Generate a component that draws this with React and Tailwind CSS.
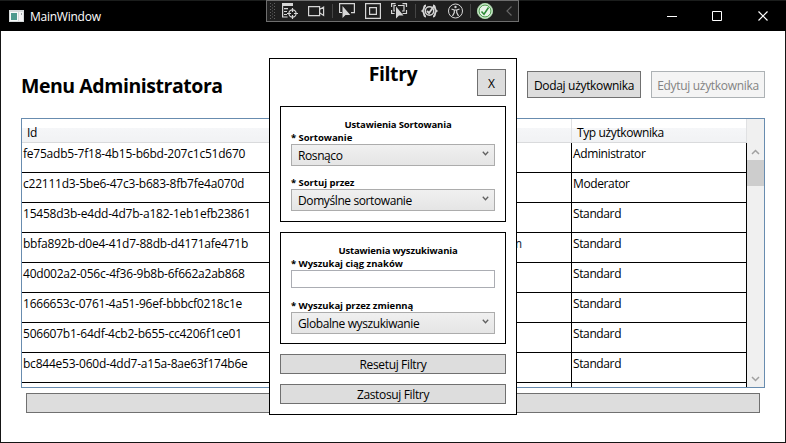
import React from "react";

const rows = [
  ["fe75adb5-7f18-4b15-b6bd-207c1c51d670", "", "Administrator"],
  ["c22111d3-5be6-47c3-b683-8fb7fe4a070d", "", "Moderator"],
  ["15458d3b-e4dd-4d7b-a182-1eb1efb23861", "", "Standard"],
  ["bbfa892b-d0e4-41d7-88db-d4171afe471b", "m", "Standard"],
  ["40d002a2-056c-4f36-9b8b-6f662a2ab868", "", "Standard"],
  ["1666653c-0761-4a51-96ef-bbbcf0218c1e", "", "Standard"],
  ["506607b1-64df-4cb2-b655-cc4206f1ce01", "", "Standard"],
  ["bc844e53-060d-4dd7-a15a-8ae63f174b6e", "", "Standard"],
  ["", "", ""],
];

function DebugToolbar() {
  return (
    <div className="absolute left-[266px] top-[-1px] h-[22px] w-[253px] border border-[#6e6e6e] bg-[#1f1f1f]">
      <svg width="251" height="20" viewBox="267 1 251 20" fill="none" stroke="#d6d6d6" strokeWidth="1.2">
        <g stroke="#606060" strokeWidth="1" strokeDasharray="1 2">
          <path d="M270.5 3v16M274.5 3v16" />
          <path d="M272.5 4.5v14" />
        </g>
        <path d="M282 4.5h11" strokeWidth="3" />
        <path d="M282.6 6v11h5M284 8.6h4M284 11.5h3M284 14.5h3" />
        <circle cx="292.5" cy="13.5" r="3.6" />
        <path d="M292.5 8v4M292.5 15v4M287 13.5h4M294 13.5h4" />
        <path d="M308.6 6.6h11v9h-11zM319.6 9.6l4-2.6v8.4l-4-2.6" />
        <path d="M332.5 4v14M415.5 4v14M470.5 4v14" stroke="#454545" strokeWidth="1" />
        <path d="M342 12.5h-2.4V3.6h14.8v9H351" />
        <path d="M342.5 6v12l3-3h4.8z" fill="#d6d6d6" stroke="none" />
        <path d="M365.6 3.6h14.8v14.8h-14.8zM369.6 7.6h6.8v6.8h-6.8z" />
        <path d="M391.6 7V3.6h4M402.5 3.6h4V7M406.5 10v3.5h-4M391.6 10v3.5h3M398 5.5h6v5.5h-2M396 5.5h-2V11h1" />
        <path d="M396 6.5v12l3-3h4.5z" fill="#d6d6d6" stroke="none" />
        <path d="M426 5.5c-3 0-1 4-3.5 5.5 2.500 1.500.5 5.500 3.500 5.500M433 5.500c3 0 1 4 3.500 5.500-2.500 1.500-.5 5.500-3.500 5.500" strokeWidth="1.9" />
        <circle cx="429.500" cy="11" r="4.200" strokeWidth="1.500" />
        <path d="M427 11l2 2 5-7" strokeWidth="1.800" />
        <circle cx="455.500" cy="11" r="7" strokeWidth="1" />
        <circle cx="455.500" cy="7" r="1.200" fill="#d6d6d6" stroke="none" />
        <path d="M451.500 9l2.700 1h2.600l2.700-1M454.300 10v2.500l-1.800 3.500M456.700 10v2.500l1.800 3.500" />
        <circle cx="485" cy="11" r="7.600" fill="#e8f3e8" stroke="#a9d6a9" strokeWidth="1" />
        <circle cx="485" cy="11" r="6" stroke="#389438" strokeWidth="1" />
        <path d="M481.500 11.500l2.500 2.700 4.500-6.700" stroke="#2b8a35" strokeWidth="1.500" />
        <path d="M511.500 6.500L507 11l4.500 4.500" stroke="#686868" strokeWidth="1.200" />
      </svg>
    </div>
  );
}

function TitleBar() {
  return (
    <header className="relative flex h-[31px] shrink-0 items-center border-t border-[#1b1d1c] bg-black text-white">
      <svg className="ml-[9px] mb-px" width="15" height="12" viewBox="0 0 15 12">
        <rect width="15" height="12" fill="#d6dadb" />
        <rect x="1" y="2" width="8" height="9" fill="#f7fafa" />
        <rect x="2" y="3" width="6" height="7" fill="#4e9a8e" />
        <rect x="10" y="2" width="4" height="9" fill="#f4f4f4" />
        <rect x="12" y="3" width="1" height="2" fill="#9fa7aa" />
      </svg>
      <span className="ml-[6px] pt-px text-[12px] tracking-[-0.25px]">MainWindow</span>
      <svg className="ml-auto mr-[17px] mb-px" width="102" height="12" viewBox="0 0 102 12" fill="none" stroke="white" strokeWidth="1">
        <path d="M0 6.500h10M45.500 1.500h9v9h-9z" />
        <path d="M91.500 1.500l9 9M100.500 1.500l-9 9" strokeWidth="1.200" />
      </svg>
      <DebugToolbar />
    </header>
  );
}

function Select({ children }) {
  return (
    <div className="flex h-[22px] items-center justify-between border border-[#acacac] bg-linear-to-b from-[#f0f0f0] to-[#e5e5e5] pl-[6px] pr-[5px]">
      <span className="pt-[2px] tracking-[-0.4px]">{children}</span>
      <svg className="mb-[3px]" width="7" height="5" viewBox="0 0 7 5" fill="none" stroke="#606060" strokeWidth="1.300">
        <path d="M.8.8l2.700 3L6.200.8" />
      </svg>
    </div>
  );
}

function Label({ children }) {
  return <div className="h-[13px] text-[9.500px] font-bold leading-[13px] tracking-[-0.04px]">{children}</div>;
}

function GroupTitle({ children }) {
  return <div className="h-[13px] pl-[10px] text-center text-[9.500px] font-bold leading-[13px] tracking-[-0.14px]">{children}</div>;
}

function FilterDialog() {
  return (
    <section className="absolute left-[269px] top-[58px] flex h-[357px] w-[248px] flex-col border border-black bg-white px-[10px]">
      <div className="flex h-[47px]">
        <h2 className="w-[226px] pl-[29px] pt-[2px] text-center text-[19.500px] font-bold leading-[26px] tracking-[-0.4px]">Filtry</h2>
        <button className="mt-[10px] h-[27px] w-[29px] shrink-0 border border-[#707070] bg-[#dddddd] pt-[2px]">X</button>
      </div>
      <fieldset className="flex h-[116px] flex-col border border-black px-[10px] pt-[11px]">
        <GroupTitle>Ustawienia Sortowania</GroupTitle>
        <Label>* Sortowanie</Label>
        <Select>Rosnąco</Select>
        <div className="h-[10px]" />
        <Label>* Sortuj przez</Label>
        <Select>Domyślne sortowanie</Select>
      </fieldset>
      <fieldset className="mt-[10px] flex h-[112px] flex-col border border-black px-[10px] pt-[11px]">
        <GroupTitle>Ustawienia wyszukiwania</GroupTitle>
        <Label>* Wyszukaj ciąg znaków</Label>
        <div className="h-[18px] border border-[#abadb3] bg-white" />
        <div className="h-[11px]" />
        <Label>* Wyszukaj przez zmienną</Label>
        <Select>Globalne wyszukiwanie</Select>
      </fieldset>
      <button className="mt-[10px] h-[20px] border border-[#707070] bg-[#dddddd] pt-[2px] leading-[16px] tracking-[-0.35px]">Resetuj Filtry</button>
      <button className="mt-[10px] h-[20px] border border-[#707070] bg-[#dddddd] pt-[2px] leading-[16px] tracking-[-0.35px]">Zastosuj Filtry</button>
    </section>
  );
}

function ScrollBar() {
  return (
    <div className="flex w-[17px] shrink-0 flex-col items-center bg-[#f0f0f0] pt-[30px]">
      <svg width="9" height="6" viewBox="0 0 9 6" fill="none" stroke="#a0a0a0" strokeWidth="1.500">
        <path d="M1 5l3.500-3.500L8 5" />
      </svg>
      <div className="mt-[5px] h-[26px] w-full bg-[#cdcdcd]" />
      <svg className="mb-[5px] mt-auto" width="9" height="6" viewBox="0 0 9 6" fill="none" stroke="#a0a0a0" strokeWidth="1.500">
        <path d="M1 1l3.500 3.500L8 1" />
      </svg>
    </div>
  );
}

export default function App() {
  return (
    <div className="relative flex h-[443px] w-[786px] flex-col overflow-hidden bg-white font-['Open_Sans','Noto_Sans',sans-serif] text-[12px] leading-[16px] text-black">
      <TitleBar />
      <main className="flex flex-1 flex-col border-x border-b border-[#151515] pl-[20px] pr-[20px]">
        <div className="flex h-[87px] items-start">
          <h1 className="pt-[42px] text-[19.500px] font-bold leading-[26px] tracking-[-0.45px]">Menu Administratora</h1>
          <button className="ml-auto mt-[40px] h-[27px] w-[114px] whitespace-nowrap border border-[#707070] bg-[#dddddd] pt-[2px] tracking-[-0.32px]">Dodaj użytkownika</button>
          <button className="ml-[10px] mt-[40px] h-[27px] w-[114px] whitespace-nowrap border border-[#adb2b5] bg-[#f4f4f4] pt-[2px] tracking-[-0.32px] text-[#838383]">Edytuj użytkownika</button>
        </div>
        <div className="flex h-[270px] border border-[#688caf]">
          <div className="flex flex-1 flex-col overflow-hidden">
            <div className="flex h-[24px] shrink-0 border-b border-[#d9dadc] bg-[linear-gradient(to_bottom,#ffffff_0%,#ffffff_38%,#f5f6f8_40%,#f1f2f4_100%)] leading-[27px] tracking-[-0.38px]">
              <span className="w-[550px] border-r border-[#e0e1e3] pl-[5px]">Id</span>
              <span className="flex-1 border-r border-[#e0e1e3] pl-[5px]">Typ użytkownika</span>
            </div>
            {rows.map((row, i) => (
              <div key={i} className="flex h-[30px] shrink-0 border-b border-black leading-[21px]">
                <span className="w-[489px] pl-px tracking-[-0.22px]">{row[0]}</span>
                <span className="w-[61px] border-r border-black text-[#112233]">{row[1]}</span>
                <span className="flex-1 border-r border-black pl-px tracking-[-0.38px]">{row[2]}</span>
              </div>
            ))}
          </div>
          <ScrollBar />
        </div>
        <button className="ml-[5px] mr-[5px] mt-[5px] h-[20px] border border-[#707070] bg-[#dddddd]" aria-label="Filtry" />
      </main>
      <FilterDialog />
    </div>
  );
}
